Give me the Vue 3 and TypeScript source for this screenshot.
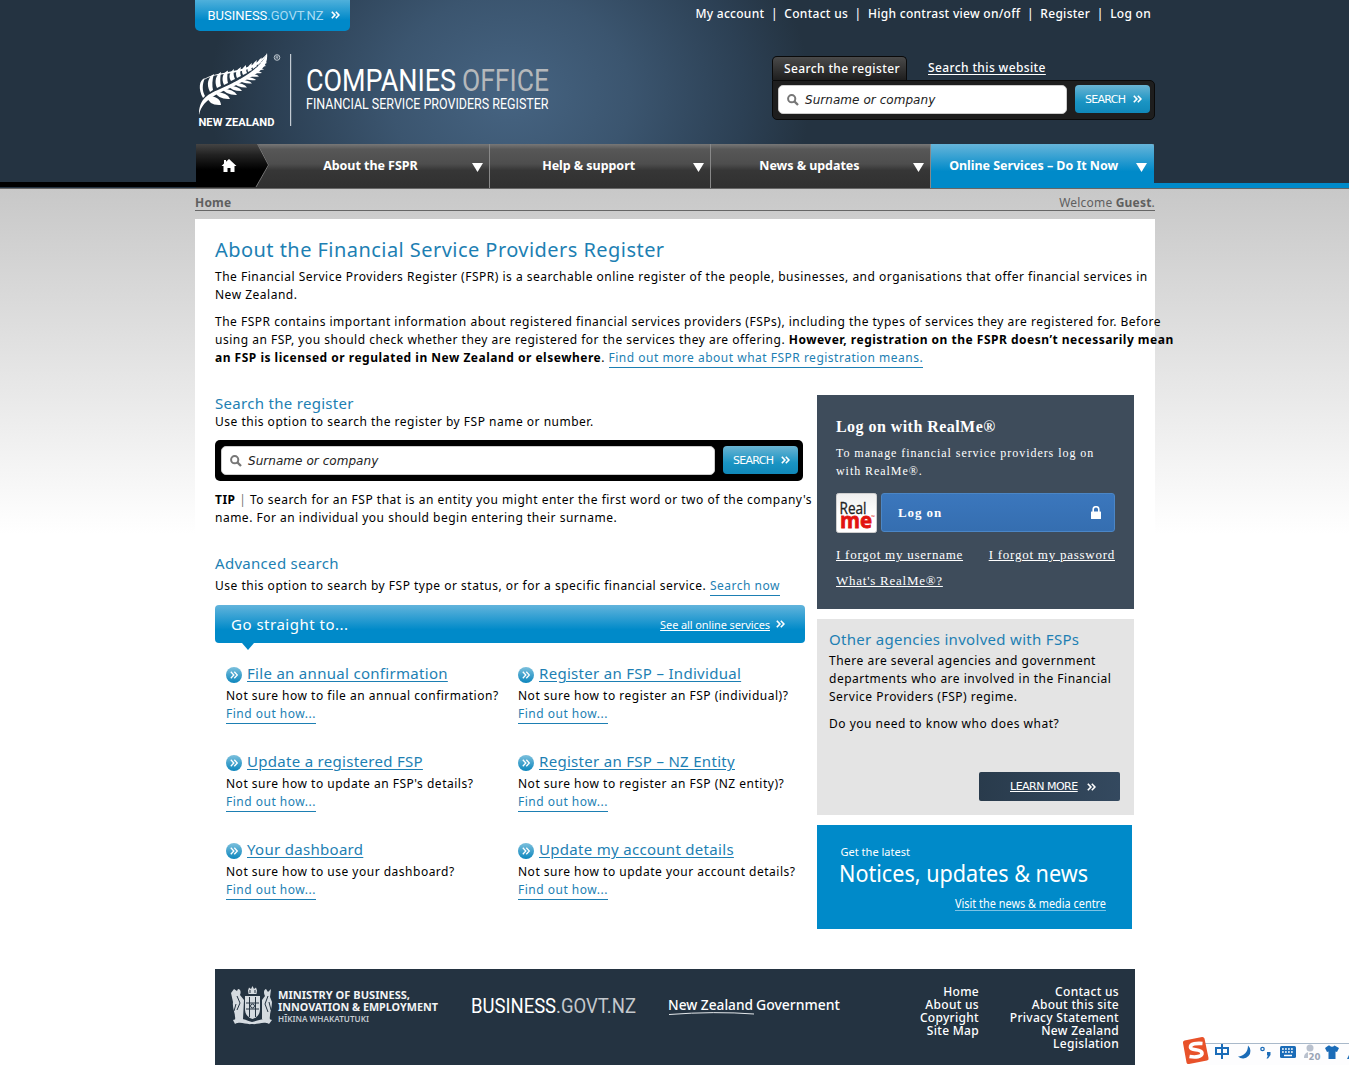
<script setup lang="ts">
interface Task {
  title: string
  question: string
  cls: string
}

const topLinks: string[] = ['My account', 'Contact us', 'High contrast view on/off', 'Register', 'Log on']

const navItems: string[] = ['About the FSPR', 'Help & support', 'News & updates']

const tasks: Task[] = [
  { title: 'File an annual confirmation', question: 'Not sure how to file an annual confirmation?', cls: 't1' },
  { title: 'Register an FSP – Individual', question: 'Not sure how to register an FSP (individual)?', cls: 't2' },
  { title: 'Update a registered FSP', question: "Not sure how to update an FSP's details?", cls: 't3' },
  { title: 'Register an FSP – NZ Entity', question: 'Not sure how to register an FSP (NZ entity)?', cls: 't4' },
  { title: 'Your dashboard', question: 'Not sure how to use your dashboard?', cls: 't5' },
  { title: 'Update my account details', question: 'Not sure how to update your account details?', cls: 't6' },
]

const footerLeft: string[] = ['Home', 'About us', 'Copyright', 'Site Map']
const footerRight: string[] = ['Contact us', 'About this site', 'Privacy Statement', 'New Zealand', 'Legislation']

// Leaflets along the fern stem: base point, tip point and half width
const lowerLeaves: number[][] = [
  [12, 44, 26, 53, 4.4], [20, 40, 35, 47, 3.2], [27, 36.5, 42, 43, 2.6], [33, 33.5, 47, 39, 2.1],
  [38.5, 30.5, 52, 35.5, 1.9], [43.5, 27.5, 57, 31.5, 1.7], [48, 25, 61, 28, 1.6], [52.5, 22, 64, 24.5, 1.5],
  [56.5, 19, 67, 21, 1.3], [60, 16, 69, 17.5, 1.2], [63, 13, 71, 14, 1.1], [65.5, 10, 72, 11, 1],
]
const leafPath = (l: number[]): string => {
  const [x1, y1, x2, y2, w] = l
  const mx = (x1 + x2) / 2 + 2
  const my = (y1 + y2) / 2
  return `M${x1} ${y1}Q${mx + w} ${my - w} ${x2} ${y2}Q${mx - w - 3} ${my + w + 1} ${x1} ${y1}Z`
}
const upperLeaves: string[] = [
  'M8 46C3 37 4 28 10 26C7 32 7 39 10 44Z',
  'M15 40C11 32 13 25 19 22C17 28 17 34 18 38Z',
  'M22 36C19 29 21 23 26 20C25 26 25 31 26 34Z',
  'M29 33C26 26 28 21 33 18.500C32 24 32 28 33 31Z',
  'M36 29C33 24 35 20 39 17C38 22 39 25 40 27Z',
  'M42 26C40 21 41 18 46 15C45 19 45 22 46 24Z',
  'M48 23C46 19 47 16 51 13C51 17 51 19 52 21Z',
  'M53 20C52 16 53 14 57 11C56 15 56 16 57 18Z',
  'M58 17C57 13 58 11 62 8C61 12 61 13 62 14Z',
  'M63 13C62 10 64 7 67 5.500C66 8 66 9 66 10Z',
]
</script>

<template>
  <div class="page">
    <svg class="defs" width="0" height="0" aria-hidden="true">
      <symbol id="chev" viewBox="0 0 9 8">
        <path d="M.8 .8L3.900 4L.8 7.200M4.800 .8L7.900 4L4.800 7.200" fill="none" stroke="#fff" stroke-width="1.600" />
      </symbol>
      <symbol id="lens" viewBox="0 0 12 12">
        <circle cx="4.700" cy="4.700" r="3.600" fill="none" stroke="#777" stroke-width="2" />
        <path d="M7.400 7.400L11 11" stroke="#777" stroke-width="2.300" />
      </symbol>
    </svg>

    <header class="header">
      <div class="wrap head-inner">
        <div class="head-left">
          <a class="biz-tab">
            <svg width="155" height="31">
              <text x="12.500" y="20" textLength="116" lengthAdjust="spacingAndGlyphs" class="din biz-text"><tspan>BUSINESS</tspan><tspan class="faded">.GOVT.NZ</tspan></text>
              <use href="#chev" x="136" y="11" width="9" height="8" />
            </svg>
          </a>
          <svg class="logo" width="360" height="80" viewBox="0 0 360 80">
            <g fill="#fff">
              <path d="M4 64C4 50 10 44 25 38C45 29 66 18 72 2C74 18 60 24 43 33C26 42 8 46 4 64Z" transform="translate(0 -1)" />
              <path d="M9 28C12 23 25 22 38 19C55 16 64 10 72 2C66 13 58 17 42 20C28 23 18 22 9 28Z" />
              <path v-for="d in upperLeaves" :key="d" :d="d" />
              <path v-for="(l, i) in lowerLeaves" :key="i" :d="leafPath(l)" />
            </g>
            <circle cx="82" cy="5.500" r="2.800" fill="none" stroke="#c9d1d8" stroke-width=".9" />
            <path d="M81 7V4.200H83V5.500H81.500L83.300 7" fill="none" stroke="#c9d1d8" stroke-width=".6" />
            <text x="3.500" y="74" textLength="76" lengthAdjust="spacingAndGlyphs" class="nz">NEW ZEALAND</text>
            <rect x="95" y="2" width="1.200" height="72" fill="#c3cbd3" />
            <text x="111" y="39" textLength="150" lengthAdjust="spacingAndGlyphs" class="din co">COMPANIES</text>
            <text x="267" y="39" textLength="87" lengthAdjust="spacingAndGlyphs" class="din co office">OFFICE</text>
            <text x="111" y="56.500" textLength="242.500" lengthAdjust="spacingAndGlyphs" class="din fsp">FINANCIAL SERVICE PROVIDERS REGISTER</text>
          </svg>
        </div>
        <div class="head-right">
          <div class="top-links">
            <template v-for="(l, i) in topLinks" :key="l">
              <i v-if="i > 0" class="bar">|</i><a>{{ l }}</a>
            </template>
          </div>
          <div class="search-tabs">
            <span class="tab active">Search the register</span>
            <a class="tab">Search this website</a>
          </div>
          <div class="head-search">
            <div class="field">
              <svg width="12" height="12"><use href="#lens" /></svg>
              <span>Surname or company</span>
            </div>
            <div class="btn"><span>SEARCH</span><svg width="9" height="8"><use href="#chev" /></svg></div>
          </div>
        </div>
      </div>
      <div class="nav-row">
        <div class="nav-side left"></div>
        <nav class="nav">
          <div class="home">
            <svg width="74" height="43" viewBox="0 0 74 43">
              <defs>
                <linearGradient id="hg" x1="0" y1="0" x2="0" y2="1">
                  <stop offset="0" stop-color="#444" /><stop offset=".25" stop-color="#222" /><stop offset=".6" stop-color="#000" />
                </linearGradient>
              </defs>
              <path d="M0 0H62L73 21L60 43H0Z" fill="url(#hg)" />
              <path d="M61.500 0L72.500 21L60 43" fill="none" stroke="#777" stroke-width="1" />
              <path d="M33 15L40.500 22H38.500V28H34.500V24H31.500V28H27.500V22H25.500L28 19.500V16H30V17.800Z" fill="#fff" />
            </svg>
          </div>
          <div v-for="(n, i) in navItems" :key="n" class="item" :class="'n' + i">
            <span>{{ n }}</span>
            <svg width="11" height="9"><path d="M0 0H11L5.500 9Z" fill="#fff" /></svg>
          </div>
          <div class="item online">
            <span>Online Services – Do It Now</span>
            <svg width="11" height="9"><path d="M0 0H11L5.500 9Z" fill="#fff" /></svg>
          </div>
        </nav>
        <div class="nav-side right"></div>
      </div>
    </header>

    <div class="body">
      <div class="wrap">
        <div class="crumbs">
          <b>Home</b>
          <span>Welcome <b>Guest</b>.</span>
        </div>
        <main class="panel">
          <h1>About the Financial Service Providers Register</h1>
          <p class="p1">The Financial Service Providers Register (FSPR) is a searchable online register of the people, businesses, and organisations that offer financial services in<br />New Zealand.</p>
          <p class="p2">
            <span class="l1">The FSPR contains important information about registered financial services providers (FSPs), including the types of services they are registered for. Before</span><br />
            <span class="l2">using an FSP, you should check whether they are registered for the services they are offering. <b>However, registration on the FSPR doesn’t necessarily mean</b></span><br />
            <span class="l3"><b>an FSP is licensed or regulated in New Zealand or elsewhere</b>. <a class="link">Find out more about what FSPR registration means.</a></span>
          </p>

          <div class="cols">
            <section class="main-col">
              <h2>Search the register</h2>
              <p class="intro">Use this option to search the register by FSP name or number.</p>
              <div class="big-search">
                <div class="field">
                  <svg width="12" height="12"><use href="#lens" /></svg>
                  <span>Surname or company</span>
                </div>
                <div class="btn"><span>SEARCH</span><svg width="9" height="8"><use href="#chev" /></svg></div>
              </div>
              <p class="tip"><b>TIP</b> <i>|</i> To search for an FSP that is an entity you might enter the first word or two of the company's<br />name. For an individual you should begin entering their surname.</p>
              <h2 class="adv">Advanced search</h2>
              <p class="adv-p">Use this option to search by FSP type or status, or for a specific financial service. <a class="link">Search now</a></p>
              <div class="banner">
                <span class="go">Go straight to...</span>
                <span class="all"><u>See all online services</u><svg width="9" height="8"><use href="#chev" /></svg></span>
              </div>
              <div class="tasks">
                <article v-for="t in tasks" :key="t.title" class="task" :class="t.cls">
                  <div class="task-title">
                    <svg width="16" height="16" viewBox="0 0 16 16">
                      <defs>
                        <linearGradient id="cg" x1="0" y1="0" x2="0" y2="1">
                          <stop offset="0" stop-color="#7cc0dd" /><stop offset="1" stop-color="#0c86bd" />
                        </linearGradient>
                      </defs>
                      <circle cx="8" cy="8" r="8" fill="url(#cg)" />
                      <path d="M4.800 4.800L7.800 8L4.800 11.200M8.300 4.800L11.300 8L8.300 11.200" fill="none" stroke="#fff" stroke-width="1.300" />
                    </svg>
                    <a>{{ t.title }}</a>
                  </div>
                  <p>{{ t.question }}</p>
                  <p><a class="link how">Find out how...</a></p>
                </article>
              </div>
            </section>

            <aside class="side">
              <section class="realme">
                <h3>Log on with RealMe®</h3>
                <p>To manage financial service providers log on<br />with RealMe®.</p>
                <div class="logon">
                  <svg class="rm" width="41" height="40" viewBox="0 0 41 40">
                    <defs>
                      <linearGradient id="rg" x1="0" y1="0" x2="0" y2="1">
                        <stop offset="0" stop-color="#eee" /><stop offset=".5" stop-color="#fff" /><stop offset="1" stop-color="#fff" />
                      </linearGradient>
                    </defs>
                    <rect x=".5" y=".5" width="40" height="39" rx="2" fill="url(#rg)" stroke="#cfcfcf" />
                    <text x="3.500" y="21" textLength="27" lengthAdjust="spacingAndGlyphs" class="rm-real">Real</text>
                    <text x="4" y="34.500" textLength="32" lengthAdjust="spacingAndGlyphs" class="rm-me">me</text>
                    <text x="35" y="26" class="rm-tm">™</text>
                  </svg>
                  <div class="logon-btn">
                    <b>Log on</b>
                    <svg width="10" height="13" viewBox="0 0 10 13">
                      <path d="M2.200 6V3.500A2.800 2.800 0 0 1 7.800 3.500V6" fill="none" stroke="#fff" stroke-width="1.600" />
                      <rect x="0" y="5.500" width="10" height="7.500" rx=".5" fill="#fff" />
                    </svg>
                  </div>
                </div>
                <div class="forgot"><a class="fu">I forgot my username</a><a class="fp">I forgot my password</a></div>
                <div class="forgot whats"><a>What's RealMe®?</a></div>
              </section>

              <section class="agencies">
                <h2>Other agencies involved with FSPs</h2>
                <p>There are several agencies and government<br />departments who are involved in the Financial<br />Service Providers (FSP) regime.</p>
                <p>Do you need to know who does what?</p>
                <a class="learn"><u>LEARN MORE</u><svg width="9" height="8"><use href="#chev" /></svg></a>
              </section>

              <section class="news">
                <svg width="315" height="104">
                  <g class="news-t">
                    <text x="23.500" y="31" font-size="11.500" textLength="69.500" lengthAdjust="spacingAndGlyphs">Get the latest</text>
                    <text x="22" y="57" font-size="23.500" textLength="249" lengthAdjust="spacingAndGlyphs">Notices, updates &amp; news</text>
                    <text x="138" y="83" font-size="12" textLength="151" lengthAdjust="spacingAndGlyphs">Visit the news &amp; media centre</text>
                  </g>
                  <rect x="138" y="85" width="151" height="1" fill="#7cc3e6" />
                </svg>
              </section>
            </aside>
          </div>

          <footer class="footer">
            <svg class="f-logos" width="640" height="96">
              <!-- coat of arms -->
              <g fill="#d5dbe0">
                <path d="M33 21.500L34 18.500L36 20L37.500 17L39 20L41 18.500L42 21.500L41.500 25H33.500Z" />
                <path d="M30 27H45V40C45 46 41 49 37.500 50C34 49 30 46 30 40Z" />
                <path d="M19 20L22 22L23 20C26 20 26 24 25 26L29 31L28 50L20 52C21 44 17 40 18 33L16 24Z" />
                <path d="M56 20L53 23L51 20C48 21 49 25 50 27L47 31L47 50L55 52C54 44 57 40 57 33L55 28Z" />
                <path d="M18 51C26 48 30 51 37 53C45 51 50 48 57 51L54 55C48 52 43 56 37 55C31 56 26 52 20 55Z" />
              </g>
              <g stroke="#243341" fill="none" stroke-width="1">
                <path d="M34.500 28V48M40.500 28V48M31 34H44M31 40H44" />
                <circle cx="37.500" cy="37" r="2" />
                <path d="M22 27L25 34L22 41M53 27L50 35L53 43M21 35L19 42M54 33L56 41M35 21V24M40 21V24" />
              </g>
              <g class="mbie">
                <text x="63" y="30" font-size="11" textLength="132" lengthAdjust="spacingAndGlyphs">MINISTRY OF BUSINESS,</text>
                <text x="63" y="42" font-size="11" textLength="160" lengthAdjust="spacingAndGlyphs">INNOVATION &amp; EMPLOYMENT</text>
                <text x="63" y="53" font-size="8" textLength="91" lengthAdjust="spacingAndGlyphs" class="maori">HĪKINA WHAKATUTUKI</text>
              </g>
              <text x="256" y="44" textLength="165" lengthAdjust="spacingAndGlyphs" class="din f-biz"><tspan>BUSINESS</tspan><tspan class="grey">.GOVT.NZ</tspan></text>
              <g class="nzg">
                <text x="453" y="41" textLength="85" lengthAdjust="spacingAndGlyphs">New Zealand</text>
                <text x="541" y="41" textLength="84" lengthAdjust="spacingAndGlyphs">Government</text>
              </g>
              <path d="M454 45.500Q500 42 539 45" fill="none" stroke="#e4e8eb" stroke-width="1" />
            </svg>
            <ul class="fl"><li v-for="l in footerLeft" :key="l">{{ l }}</li></ul>
            <ul class="fr"><li v-for="l in footerRight" :key="l">{{ l }}</li></ul>
          </footer>
        </main>
      </div>
    </div>

    <!-- input method toolbar floating over the page corner -->
    <div class="ime">
      <svg width="169" height="30" viewBox="0 0 169 30">
        <path d="M24 7.500H169V30H24Z" fill="#fdfdfe" />
        <path d="M24 7.500H169" stroke="#a9b9ca" />
        <path d="M3 7Q2.500 5 4.500 4.500L22 1Q24 .8 24.500 2.500L28.500 22Q29 24 27 24.500L9 28Q7 28.500 6.500 26.500Z" fill="#e8522a" />
        <path d="M22.500 7.500C17 7 10 7.500 10.500 11.500C11 15 21.500 12.500 22 17C22.500 21 15 21.500 9.500 20.500" fill="none" stroke="#fff" stroke-width="3.600" />
        <g fill="none" stroke="#1b6cb8" stroke-width="2">
          <path d="M36 12H48V18H36ZM42 8V23" />
        </g>
        <path d="M68 9.500A7 7 0 1 1 58 20.500C64 20 68 16 68 9.500Z" fill="#1b6cb8" />
        <circle cx="82.500" cy="13" r="1.700" fill="none" stroke="#1b6cb8" stroke-width="1.300" />
        <path d="M87 16H90.500V19L88 22.500H86.500L88 19.500H87Z" fill="#1b6cb8" />
        <rect x="100" y="10" width="16" height="12" rx="1.500" fill="#1b6cb8" />
        <path d="M102 13H114M102 16H114" stroke="#fff" stroke-width="1.500" stroke-dasharray="1.800 1.200" />
        <path d="M104 19.500H112" stroke="#fff" stroke-width="1.500" />
        <g fill="#b9c1ce">
          <circle cx="130" cy="12" r="3.500" />
          <path d="M124 22C124 17 127 16 130 16C132 16 134 17 134 18V22Z" />
        </g>
        <rect x="128" y="16" width="13" height="8" fill="#fdfdfe" />
        <text x="128.500" y="23.500" textLength="12" lengthAdjust="spacingAndGlyphs" class="twenty">20</text>
        <path d="M148.500 9.500H149.500Q152 12 154.500 9.500L159 12L157 16L155.500 15.500V23H148.500V15.500L147 16L145 12Z" fill="#1b6cb8" />
        <path d="M167 23L169 19V23Z" fill="#1b6cb8" />
      </svg>
    </div>
  </div>
</template>

<style>
body {
  margin: 0;
  background: #fff;
  overflow: hidden;
}
</style>

<style scoped>
.page {
  position: relative;
  width: 1349px;
  height: 1065px;
  overflow: hidden;
  font-family: 'Noto Sans', 'Open Sans', sans-serif;
  font-size: 12px;
  line-height: 18px;
  letter-spacing: 0.5px;
  color: #000;
  white-space: nowrap;
}
.defs { position: absolute; }
svg { display: block; flex: none; }
svg text { letter-spacing: 0; }
h1, h2, h3, p, ul { margin: 0; padding: 0; font-weight: 400; }
i { font-style: normal; }
.wrap { width: 960px; margin-left: 195px; }
.din { font-family: 'Roboto', sans-serif; fill: #fff; }

.header {
  height: 188px;
  background: radial-gradient(ellipse 300px 250px at 510px 95px, #466482 0%, #3b556f 40%, #2c4054 78%, #243341 100%) #243341;
}
.head-inner { height: 144px; display: flex; justify-content: space-between; }
.head-left { display: flex; flex-direction: column; gap: 21px; }
.biz-tab {
  display: block;
  width: 155px;
  height: 31px;
  border-radius: 0 0 5px 5px;
  background: linear-gradient(#4fb0db, #0089c9 65%);
}
.biz-text { font-size: 13px; }
.faded { fill: #a9dcf3; }
.nz { font: bold 11.500px 'Roboto', sans-serif; fill: #fff; }
.co { font-size: 31px; }
.office { fill: #b5b8bb; }
.fsp { font-size: 15px; }

.head-right { width: 383px; display: flex; flex-direction: column; align-items: flex-end; }
.top-links {
  height: 56px;
  line-height: 28px;
  padding-right: 4px;
  color: #fff;
  font-weight: 500;
  letter-spacing: 0.28px;
  display: flex;
}
.bar { width: 20px; text-align: center; }
.search-tabs { width: 383px; height: 24px; display: flex; line-height: 22px; color: #fff; }
.tab { font-weight: 500; letter-spacing: 0.38px; text-decoration: underline; margin-left: 21px; text-underline-offset: 2px; line-height: 24px; }
.tab.active {
  box-sizing: border-box;
  width: 135px;
  height: 24px;
  margin: 0;
  padding-left: 11px;
  text-decoration: none;
  border: 1px solid #0a0a0a;
  border-bottom: 0;
  border-radius: 5px 5px 0 0;
  background: linear-gradient(#4a4a4a, #1e1e1e);
}
.head-search {
  box-sizing: border-box;
  width: 383px;
  height: 40px;
  padding: 4px 4px 0 5px;
  display: flex;
  justify-content: space-between;
  background: #1e1e1e;
  border: 1px solid #0a0a0a;
  border-radius: 0 5px 5px 5px;
}
.field {
  box-sizing: border-box;
  width: 289px;
  height: 29px;
  display: flex;
  align-items: center;
  gap: 6px;
  padding-left: 8px;
  background: #fff;
  border: 1px solid #ccc;
  border-radius: 5px;
  font: italic 12px 'DejaVu Sans', sans-serif;
  letter-spacing: 0.05px;
  color: #222;
}
.btn {
  width: 75px;
  height: 28px;
  border-radius: 4px;
  background: linear-gradient(#6ab4d3, #1a94c3 60%, #1088b9);
  color: #fff;
  display: flex;
  align-items: center;
  padding-left: 10px;
  box-sizing: border-box;
  gap: 8px;
  font: 11px 'DejaVu Sans', sans-serif;
  letter-spacing: -0.7px;
}

.nav-row { height: 44px; display: flex; align-items: flex-end; }
.nav-side { height: 5px; }
.nav-side.left { width: 196px; background: #000; margin-bottom: 1px; }
.nav-side.right { flex: 1; background: #008ac9; }
.nav { width: 958px; height: 44px; display: flex; background: linear-gradient(#777, #575757 12%, #4e4e4e 45%, #363636 60%, #303030); }
.home { width: 73px; }
.item {
  box-sizing: border-box;
  position: relative;
  width: 221px;
  display: flex;
  align-items: center;
  justify-content: center;
  border-right: 1px solid #888;
  color: #fff;
  font-weight: 700;
  font-size: 12.5px;
  letter-spacing: -0.05px;
  padding-right: 22px;
}
.item svg { position: absolute; right: 6px; top: 19px; }
.n0 { padding-right: 17px; }
.item.online {
  width: 223px;
  padding-right: 18px;
  border: 0;
  background: linear-gradient(#66b5da, #008ac9 62%);
  border-radius: 0 2px 0 0;
}
.item.online svg { right: 7px; }

.body { background: linear-gradient(#c8c8c8 0, #fff 345px); height: 877px; border-top: 1px solid #666; box-sizing: border-box; }
.crumbs {
  height: 21px;
  border-bottom: 1px solid #666;
  display: flex;
  justify-content: space-between;
  line-height: 27px;
  color: #5f5f5f;
  letter-spacing: 0.2px;
}
.panel { margin-top: 8px; background: #fff; padding: 17px 20px 0; height: 829px; }
h1 { font-size: 20px; line-height: 28px; margin-bottom: 4px; color: #1d7fb3; letter-spacing: 0.45px; }
h2 { font-size: 15px; line-height: 16px; color: #1d7fb3; letter-spacing: 0.3px; }
.p1 { margin-bottom: 9px; }
.link { color: #1d7fb3; border-bottom: 1px solid #1d7fb3; padding-bottom: 1px; }
.cols { margin-top: 28px; display: flex; justify-content: space-between; padding-right: 1px; height: 574px; }
.main-col { width: 590px; }
.intro { margin-top: 2px; }
.big-search {
  box-sizing: border-box;
  width: 588px;
  height: 41px;
  margin-top: 9px;
  padding: 6px 5px 0 6px;
  display: flex;
  justify-content: space-between;
  background: #000;
  border-radius: 5px;
}
.big-search .field { width: 494px; }
.tip { margin-top: 10px; }
.tip i { color: #777; }
.adv { margin-top: 28px; }
.adv-p { margin-top: 6px; }
.banner {
  position: relative;
  height: 38px;
  margin-top: 10px;
  padding: 0 20px 0 16px;
  display: flex;
  align-items: center;
  justify-content: space-between;
  border-radius: 4px;
  color: #fff;
  background: linear-gradient(#62b4dc, #008ac9 65%);
}
.banner::after {
  content: '';
  position: absolute;
  left: 27px;
  top: 38px;
  border: 6px solid transparent;
  border-top: 7px solid #0087c6;
  border-bottom: 0;
}
.go { font-size: 15px; }
.all { display: flex; align-items: center; gap: 6px; font: 11px 'Noto Sans', sans-serif; letter-spacing: -0.1px; }
.tasks { display: grid; grid-template-columns: 292px 290px; grid-auto-rows: 88px; padding: 19px 0 0 11px; }
.task-title { display: flex; align-items: center; gap: 5px; height: 22px; margin-bottom: 3px; }
.task-title svg { margin-top: 3px; }
.task-title a { font-size: 15px; color: #1d7fb3; text-decoration: underline; text-underline-offset: 2px; letter-spacing: 0.3px; }

.side { width: 317px; display: flex; flex-direction: column; gap: 10px; }
.realme {
  box-sizing: border-box;
  height: 214px;
  padding: 22px 19px 0;
  background: #3e4c5b;
  color: #fff;
  font-family: 'Liberation Serif', serif;
}
.realme h3 { font-size: 16px; font-weight: 700; line-height: 20px; letter-spacing: 0.45px; margin-bottom: 7px; }
.realme p { letter-spacing: 0.95px; }
.logon { display: flex; gap: 4px; margin-top: 13px; }
.rm-real { font: 16px 'Open Sans', sans-serif; fill: #222; stroke: #222; stroke-width: 0.3; }
.rm-me { font: bold 22px 'Open Sans', sans-serif; fill: #e2140f; stroke: #e2140f; stroke-width: 0.8; }
.rm-tm { font: 5px 'Open Sans', sans-serif; fill: #e2140f; }
.logon-btn {
  box-sizing: border-box;
  width: 234px;
  height: 39px;
  padding: 0 13px 0 16px;
  border: 1px solid #4b86c6;
  border-radius: 3px;
  background: linear-gradient(#3b77bd, #356eb0);
  display: flex;
  align-items: center;
  justify-content: space-between;
  font-size: 13px;
  letter-spacing: 0.9px;
}
.forgot { display: flex; justify-content: space-between; margin-top: 13px; height: 18px; font-size: 13px; text-decoration: underline; letter-spacing: 0.75px; }
.whats { margin-top: 8px; }
.agencies { box-sizing: border-box; height: 196px; padding: 12px 14px 0 12px; background: #e4e4e4; display: flex; flex-direction: column; }
.agencies h2 { margin-bottom: 5px; }
.agencies p { margin-bottom: 9px; }
.learn {
  box-sizing: border-box;
  align-self: flex-end;
  width: 141px;
  height: 29px;
  margin-top: 30px;
  padding-left: 31px;
  display: flex;
  align-items: center;
  gap: 9px;
  border-radius: 2px;
  background: linear-gradient(90deg, #293b4c, #34495f);
  color: #fff;
  font: 11px 'DejaVu Sans', sans-serif;
  letter-spacing: -0.5px;
}
.news { width: 315px; height: 104px; background: #008ac9; }
.news-t { fill: #fff; font-family: 'Noto Sans', sans-serif; }

.footer { height: 96px; width: 920px; background: #243341; color: #fff; display: flex; line-height: 13px; }
ul { list-style: none; text-align: right; padding-top: 16px; font-weight: 500; letter-spacing: 0.3px; }
.fl { width: 124px; }
.fr { width: 140px; }
.mbie { font-family: 'Noto Sans', sans-serif; font-weight: 700; fill: #f2f4f5; }
.maori { font-weight: 600; fill: #c6cdd3; }
.f-biz { font-size: 21px; }
.grey { fill: #c3c8cc; }
.nzg { font: 500 15px 'Noto Sans', sans-serif; fill: #fff; }

.ime { position: absolute; left: 1180px; top: 1036px; }
.twenty { font: bold 8px 'DejaVu Sans', sans-serif; fill: #9aa5b5; }
</style>
